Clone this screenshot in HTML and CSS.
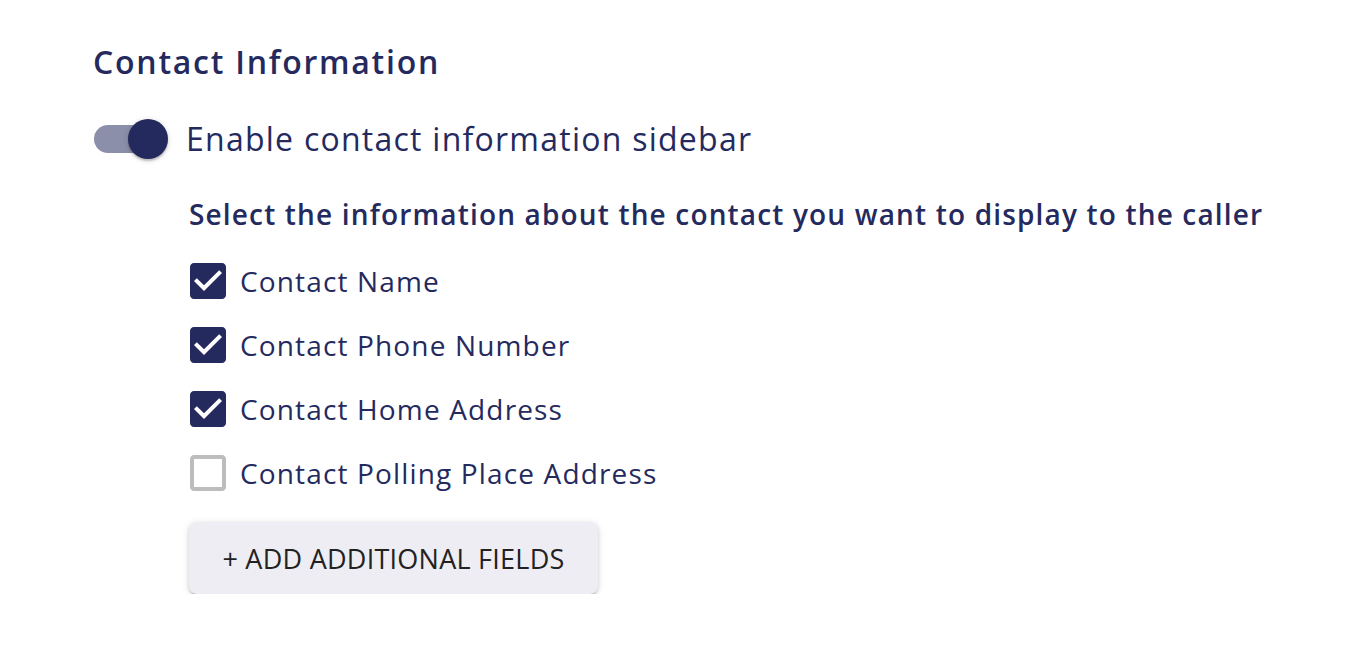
FILE: index.html
```html
<!DOCTYPE html>
<html>
<head>
<meta charset="utf-8">
<link rel="stylesheet" href="styles.css">
</head>
<body>
<main class="panel">
  <h2 class="title">Contact Information</h2>
  <div class="toggle-row">
    <span class="switch"><span class="track"></span><span class="thumb"></span></span>
    <span class="toggle-label">Enable contact information sidebar</span>
  </div>
  <div class="options">
    <p class="subhead">Select the information about the contact you want to display to the caller</p>
    <ul class="checks">
      <li class="check-row"><svg class="box on" viewBox="0 0 24 24" width="48" height="48"><path d="M19 3H5c-1.11 0-2 .9-2 2v14c0 1.1.89 2 2 2h14c1.11 0 2-.9 2-2V5c0-1.1-.89-2-2-2zm-9 14l-5-5 1.410-1.41L10 14.17l7.59-7.59L19 8l-9 9z"/></svg><span class="check-label">Contact Name</span></li>
      <li class="check-row"><svg class="box on" viewBox="0 0 24 24" width="48" height="48"><path d="M19 3H5c-1.11 0-2 .9-2 2v14c0 1.1.89 2 2 2h14c1.11 0 2-.9 2-2V5c0-1.1-.89-2-2-2zm-9 14l-5-5 1.41-1.41L10 14.17l7.59-7.59L19 8l-9 9z"/></svg><span class="check-label">Contact Phone Number</span></li>
      <li class="check-row"><svg class="box on" viewBox="0 0 24 24" width="48" height="48"><path d="M19 3H5c-1.11 0-2 .9-2 2v14c0 1.1.89 2 2 2h14c1.11 0 2-.9 2-2V5c0-1.1-.89-2-2-2zm-9 14l-5-5 1.41-1.41L10 14.17l7.59-7.59L19 8l-9 9z"/></svg><span class="check-label">Contact Home Address</span></li>
      <li class="check-row"><svg class="box off" viewBox="0 0 24 24" width="48" height="48"><path d="M19 5v14H5V5h14m0-2H5c-1.1 0-2 .9-2 2v14c0 1.1.9 2 2 2h14c1.1 0 2-.9 2-2V5c0-1.1-.9-2-2-2z"/></svg><span class="check-label">Contact Polling Place Address</span></li>
    </ul>
    <button class="add-btn">+ ADD ADDITIONAL FIELDS</button>
  </div>
</main>
</body>
</html>
```

FILE: styles.css
```css
* { box-sizing: border-box; }
html, body { margin: 0; padding: 0; background: #fff; }
body {
  font-family: "Open Sans", "Noto Sans", sans-serif;
  color: #252a5e;
}
.panel {
  display: flex;
  flex-direction: column;
  padding: 40px 0 0 93px;
}
.title {
  margin: 0;
  font-size: 32px;
  font-weight: 600;
  line-height: 44px;
  letter-spacing: 1.75px;
}
.toggle-row {
  display: flex;
  align-items: center;
  margin-top: 31px;
  height: 48px;
}
.switch {
  position: relative;
  width: 75px;
  height: 40px;
  display: inline-block;
}
.track {
  position: absolute;
  left: 1px;
  top: 6px;
  width: 66px;
  height: 28px;
  border-radius: 14px;
  background: #8c8fa9;
}
.thumb {
  position: absolute;
  left: 35px;
  top: 0;
  width: 40px;
  height: 40px;
  border-radius: 50%;
  background: #252a5e;
  box-shadow: 0 2px 2px rgba(0,0,0,0.2), 0 1px 6px rgba(0,0,0,0.14);
}
.toggle-label {
  margin-left: 18px;
  font-size: 32px;
  line-height: 44px;
  letter-spacing: 1.25px;
}
.options {
  display: flex;
  flex-direction: column;
  align-items: flex-start;
  padding-left: 96px;
}
.subhead {
  margin: 31px 0 0;
  font-size: 28px;
  font-weight: 600;
  line-height: 40px;
  letter-spacing: 1.16px;
}
.checks {
  list-style: none;
  margin: 23px 0 0 -5px;
  padding: 0;
  display: flex;
  flex-direction: column;
  gap: 16px;
}
.check-row {
  display: flex;
  align-items: center;
  height: 48px;
}
.box { flex: none; display: block; }
.box.on { fill: #252a5e; }
.box.off { fill: #bdbdbd; }
.check-label {
  margin-left: 8px;
  font-size: 28px;
  line-height: 40px;
  letter-spacing: 1.15px;
}
.add-btn {
  margin-top: 25px;
  width: 409px;
  height: 72px;
  border: none;
  border-radius: 8px;
  background: #eeedf3;
  color: #222;
  font-family: "Open Sans", "Noto Sans", sans-serif;
  font-size: 27px;
  letter-spacing: 0.25px;
  box-shadow: 0 3px 2px -2px rgba(0,0,0,0.25), 0 2px 4px rgba(0,0,0,0.16), 0 1px 10px rgba(0,0,0,0.08);
  padding: 0;
}
```
